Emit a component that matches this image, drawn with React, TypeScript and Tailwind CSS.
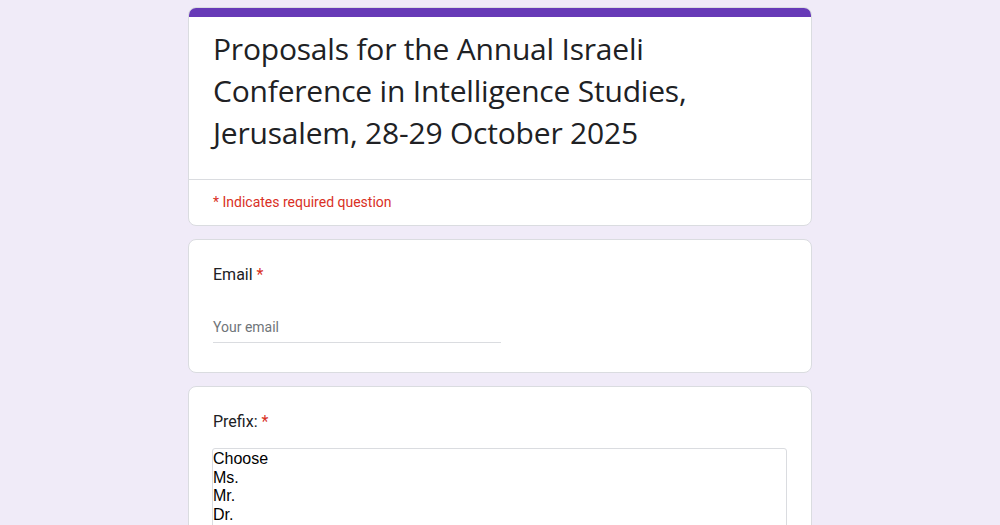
import React from "react";

export default function App() {
  return (
    <div className="min-h-[525px] w-full bg-[#f0ebf8] pt-[7px] overflow-hidden" style={{ fontFamily: "Roboto, 'Liberation Sans', sans-serif" }}>
      <div className="mx-auto w-[624px] flex flex-col gap-[13px]">
        <div className="bg-white rounded-lg border border-[#dadce0] overflow-hidden">
          <div className="h-[10px] bg-[#673ab7] -mx-px -mt-px" />
          <div className="px-6 pt-[11px] pb-[25px] border-b border-[#dadce0]">
            <h1 className="text-[30px] leading-[42px] text-[#202124] tracking-[-0.2px]" style={{ fontFamily: "'Open Sans', Roboto, sans-serif" }}>
              Proposals for the Annual Israeli Conference in Intelligence Studies, Jerusalem, 28-29 October 2025
            </h1>
          </div>
          <div className="px-6 h-[45px] flex items-center text-[14px] text-[#d93025]">
            * Indicates required question
          </div>
        </div>

        <div className="bg-white rounded-lg border border-[#dadce0] px-6 pt-[23px] h-[134px]">
          <div className="text-[16px] leading-6 text-[#202124]">
            Email <span className="text-[#d93025]">*</span>
          </div>
          <div className="mt-[30px] w-[288px] border-b border-[#dadce0] pb-[4px] text-[14px] text-[#70757a]">
            Your email
          </div>
        </div>

        <div className="bg-white rounded-lg border border-[#dadce0] px-6 pt-[23px] h-[200px]">
          <div className="text-[16px] leading-6 text-[#202124]">
            Prefix: <span className="text-[#d93025]">*</span>
          </div>
          <div className="-ml-px mt-[14px] border border-[#dadce0] rounded-[3px] h-[120px] pt-[1px] text-[16px] leading-[18.7px] text-black" style={{ fontFamily: "'Liberation Sans', Arial, sans-serif" }}>
            <div>Choose</div>
            <div>Ms.</div>
            <div>Mr.</div>
            <div>Dr.</div>
          </div>
        </div>
      </div>
    </div>
  );
}
